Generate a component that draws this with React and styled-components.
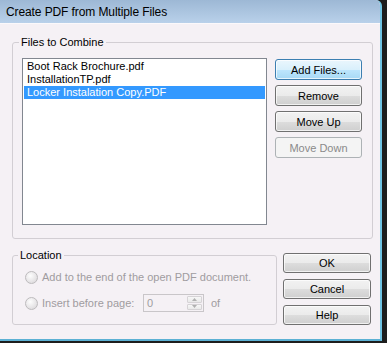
import React from 'react';
import styled, { createGlobalStyle, css } from 'styled-components';

const GlobalStyle = createGlobalStyle`
  html, body {
    margin: 0;
    padding: 0;
    background: #1c1c1c;
  }
  body {
    font-family: 'Liberation Sans', Arial, sans-serif;
    font-size: 11px;
    color: #000;
  }
`;

// Window chrome
const Window = styled.div`
  width: 387px;
  height: 343px;
  background: #1d1d1d;
  box-sizing: border-box;
  padding: 0 5px 2px 0;
`;

const Dialog = styled.div`
  width: 382px;
  height: 341px;
  box-sizing: border-box;
  border-right: 2px solid #6fc3e3;
  border-bottom: 2px solid #5cb1d4;
  border-top-right-radius: 6px;
  overflow: hidden;
  display: flex;
  flex-direction: column;
  background: #f5f1f5;
`;

const TitleBar = styled.div`
  height: 24px;
  flex: none;
  display: flex;
  align-items: center;
  padding-left: 6px;
  box-sizing: border-box;
  background: linear-gradient(#9db8d5, #b9d1ea);
  border-bottom: 1px solid #fbf9fb;
  font-size: 12px;
  letter-spacing: -0.1px;
  color: #000;
`;

const Body = styled.div`
  flex: 1;
  padding: 11px 0 0 12px;
`;

// Group boxes
const Group = styled.fieldset`
  margin: 0;
  width: ${(p) => p.width}px;
  box-sizing: border-box;
  border: 1px solid #d2ced3;
  border-radius: 3px;
  padding: ${(p) => p.pad};
  min-width: 0;
`;

const Legend = styled.legend`
  padding: 0 2px;
  margin-left: -3px;
  line-height: 14px;
  font-size: 11px;
  color: #000;
`;

const FilesRow = styled.div`
  display: flex;
  gap: 8px;
  align-items: flex-start;
`;

const ListBox = styled.div`
  width: 245px;
  height: 167px;
  box-sizing: border-box;
  background: #fff;
  border: 1px solid #828790;
  padding: 1px;
`;

const ListItem = styled.div`
  height: 13px;
  line-height: 13px;
  padding-left: 3px;
  white-space: nowrap;
  ${(p) =>
    p.selected &&
    css`
      background: #3399ff;
      color: #fff;
    `}
`;

const ButtonColumn = styled.div`
  display: flex;
  flex-direction: column;
  gap: ${(p) => p.gap}px;
  padding-top: ${(p) => p.top}px;
`;

const Button = styled.button`
  width: ${(p) => p.width}px;
  height: ${(p) => p.height}px;
  box-sizing: border-box;
  margin: 0;
  padding: 0;
  border: 1px solid #707070;
  border-radius: 3px;
  font-family: 'Liberation Sans', Arial, sans-serif;
  font-size: 11px;
  color: #000;
  background: linear-gradient(#f2f2f2 0%, #ebebeb 50%, #dddddd 51%, #cfcfcf 100%);
  box-shadow: inset 0 0 0 1px rgba(255, 255, 255, 0.7);
  ${(p) =>
    p.focused &&
    css`
      border-color: #3c7fb1;
      background: linear-gradient(#eaf6fd 0%, #d9f0fc 50%, #bee6fd 51%, #a7d9f5 100%);
    `}
  ${(p) =>
    p.disabled &&
    css`
      border-color: #adb2b5;
      background: #f4f4f4;
      color: #8a8a8a;
      box-shadow: none;
    `}
`;

const LowerRow = styled.div`
  display: flex;
  gap: 6px;
  margin-top: 9px;
  align-items: flex-start;
`;

const Options = styled.div`
  display: flex;
  flex-direction: column;
  gap: 8px;
`;

const OptionRow = styled.div`
  display: flex;
  align-items: center;
  height: 18px;
  color: #a09ca0;
`;

const Radio = styled.span`
  width: 11px;
  height: 11px;
  flex: none;
  border-radius: 50%;
  border: 1px solid #bdbbbd;
  background: radial-gradient(circle at 40% 35%, #fdfdfd 0%, #e6e4e6 60%, #d6d4d6 100%);
  margin-right: 4px;
`;

const Label = styled.span`
  width: ${(p) => (p.width ? `${p.width}px` : 'auto')};
  white-space: nowrap;
`;

const Spinner = styled.div`
  width: 61px;
  height: 18px;
  box-sizing: border-box;
  border: 1px solid #c9c6c9;
  display: flex;
  background: #f5f1f5;
`;

const SpinValue = styled.span`
  flex: 1;
  padding-left: 3px;
  line-height: 16px;
`;

const SpinButtons = styled.div`
  width: 15px;
  display: flex;
  flex-direction: column;
  gap: 1px;
  padding: 1px 1px 1px 0;
`;

const SpinButton = styled.div`
  flex: 1;
  border: 1px solid #d6d3d6;
  border-radius: 1px;
  background: linear-gradient(#f7f7f7, #e9e9e9);
  display: flex;
  align-items: center;
  justify-content: center;
`;

const Of = styled.span`
  margin-left: 7px;
`;

const Arrow = ({ up }) => (
  <svg width="5" height="3" viewBox="0 0 5 3">
    <path d={up ? 'M0 3 L2.5 0 L5 3 Z' : 'M0 0 L2.5 3 L5 0 Z'} fill="#b0b0b0" />
  </svg>
);

const files = [
  { name: 'Boot Rack Brochure.pdf' },
  { name: 'InstallationTP.pdf' },
  { name: 'Locker Instalation Copy.PDF', selected: true },
];

const App = () => {
  return (
    <>
      <GlobalStyle />
      <Window>
        <Dialog>
          <TitleBar>Create PDF from Multiple Files</TitleBar>
          <Body>
            <Group width={361} pad="9px 9px 13px 9px">
              <Legend>Files to Combine</Legend>
              <FilesRow>
                <ListBox>
                  {files.map((f) => (
                    <ListItem key={f.name} selected={f.selected}>
                      {f.name}
                    </ListItem>
                  ))}
                </ListBox>
                <ButtonColumn gap={5} top={1}>
                  <Button width={87} height={21} focused>Add Files...</Button>
                  <Button width={87} height={21}>Remove</Button>
                  <Button width={87} height={21}>Move Up</Button>
                  <Button width={87} height={21} disabled>Move Down</Button>
                </ButtonColumn>
              </FilesRow>
            </Group>
            <LowerRow>
              <Group width={265} pad="6px 8px 12px 12px">
                <Legend style={{ marginLeft: '-7px' }}>Location</Legend>
                <Options>
                  <OptionRow>
                    <Radio />
                    <Label>Add to the end of the open PDF document.</Label>
                  </OptionRow>
                  <OptionRow>
                    <Radio />
                    <Label width={101}>Insert before page:</Label>
                    <Spinner>
                      <SpinValue>0</SpinValue>
                      <SpinButtons>
                        <SpinButton><Arrow up /></SpinButton>
                        <SpinButton><Arrow /></SpinButton>
                      </SpinButtons>
                    </Spinner>
                    <Of>of</Of>
                  </OptionRow>
                </Options>
              </Group>
              <ButtonColumn gap={6} top={5}>
                <Button width={88} height={20}>OK</Button>
                <Button width={88} height={20}>Cancel</Button>
                <Button width={88} height={20}>Help</Button>
              </ButtonColumn>
            </LowerRow>
          </Body>
        </Dialog>
      </Window>
    </>
  );
};

export default App;
